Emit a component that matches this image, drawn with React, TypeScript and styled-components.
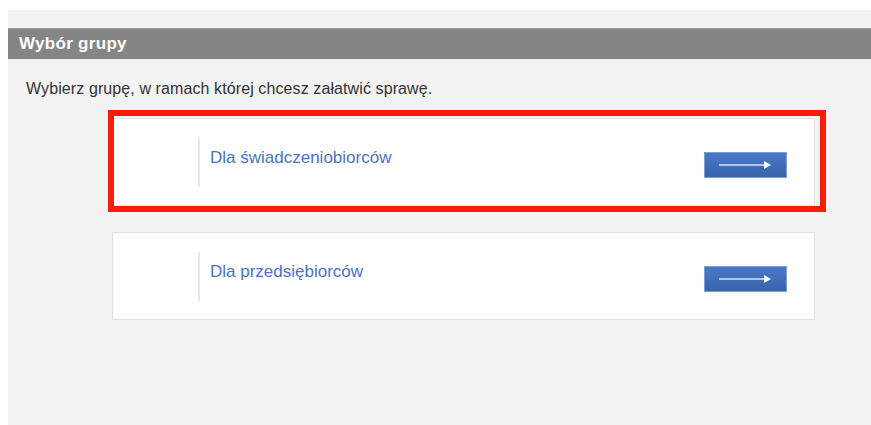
import React from "react";
import styled, { createGlobalStyle } from "styled-components";

const Global = createGlobalStyle`
  html, body {
    margin: 0;
    padding: 0;
    background: #ffffff;
  }
  body {
    font-family: "Liberation Sans", Arial, sans-serif;
  }
`;

const Page = styled.div`
  padding: 10px 0 0 8px;
  height: 425px;
  box-sizing: border-box;
  overflow: hidden;
`;

const Panel = styled.section`
  background: #f2f2f2;
  height: 100%;
  padding-top: 18px;
  box-sizing: border-box;
  display: flex;
  flex-direction: column;
`;

const Header = styled.h2`
  margin: 0;
  height: 31px;
  box-sizing: border-box;
  background: #858585;
  border-top: 1px solid #9a9a9a;
  color: #ffffff;
  font-size: 17px;
  letter-spacing: 0.3px;
  font-weight: bold;
  line-height: 29px;
  padding-left: 11px;
`;

const Intro = styled.p`
  margin: 20px 0 0 18px;
  font-size: 16px;
  letter-spacing: 0.1px;
  line-height: 20px;
  color: #333333;
`;

const CardList = styled.div`
  display: flex;
  flex-direction: column;
  gap: 26px;
  margin: 19px 0 0 104px;
  width: 703px;
`;

const CardWrap = styled.div`
  position: relative;
`;

const Card = styled.a`
  display: flex;
  align-items: center;
  height: 88px;
  box-sizing: border-box;
  background: #ffffff;
  border: 1px solid #e1e1e1;
  padding: 0 27px 0 85px;
  text-decoration: none;
  cursor: pointer;
`;

const Divider = styled.span`
  width: 2px;
  height: 49px;
  background: #e6e6e6;
  flex: none;
`;

const Label = styled.span`
  flex: 1;
  margin: 0 0 9px 10px;
  font-size: 17px;
  color: #4a72c9;
`;

const GoButton = styled.span`
  width: 83px;
  height: 26px;
  box-sizing: border-box;
  margin-top: 6px;
  border: 1px solid #7f9fd4;
  background: linear-gradient(#4779ca, #3a63aa);
  display: flex;
  align-items: center;
  justify-content: center;
`;

/* Red highlight frame drawn on top of the selected card */
const Highlight = styled.div`
  position: absolute;
  left: -4px;
  top: -8px;
  right: -11px;
  bottom: -6px;
  border: 6px solid #ff1a0a;
  pointer-events: none;
`;

const Arrow = () => (
  <svg width="53" height="10" viewBox="0 0 53 10">
    <line x1="0" y1="5" x2="46" y2="5" stroke="#dfe7f5" strokeWidth="1.6" />
    <polygon points="45,1 52,5 45,9" fill="#ffffff" />
  </svg>
);

const groups = [
  { label: "Dla świadczeniobiorców", selected: true },
  { label: "Dla przedsiębiorców", selected: false },
];

export default function App() {
  return (
    <>
      <Global />
      <Page>
        <Panel>
          <Header>Wybór grupy</Header>
          <Intro>Wybierz grupę, w ramach której chcesz załatwić sprawę.</Intro>
          <CardList>
            {groups.map((g) => (
              <CardWrap key={g.label}>
                <Card>
                  <Divider />
                  <Label>{g.label}</Label>
                  <GoButton>
                    <Arrow />
                  </GoButton>
                </Card>
                {g.selected && <Highlight />}
              </CardWrap>
            ))}
          </CardList>
        </Panel>
      </Page>
    </>
  );
}
